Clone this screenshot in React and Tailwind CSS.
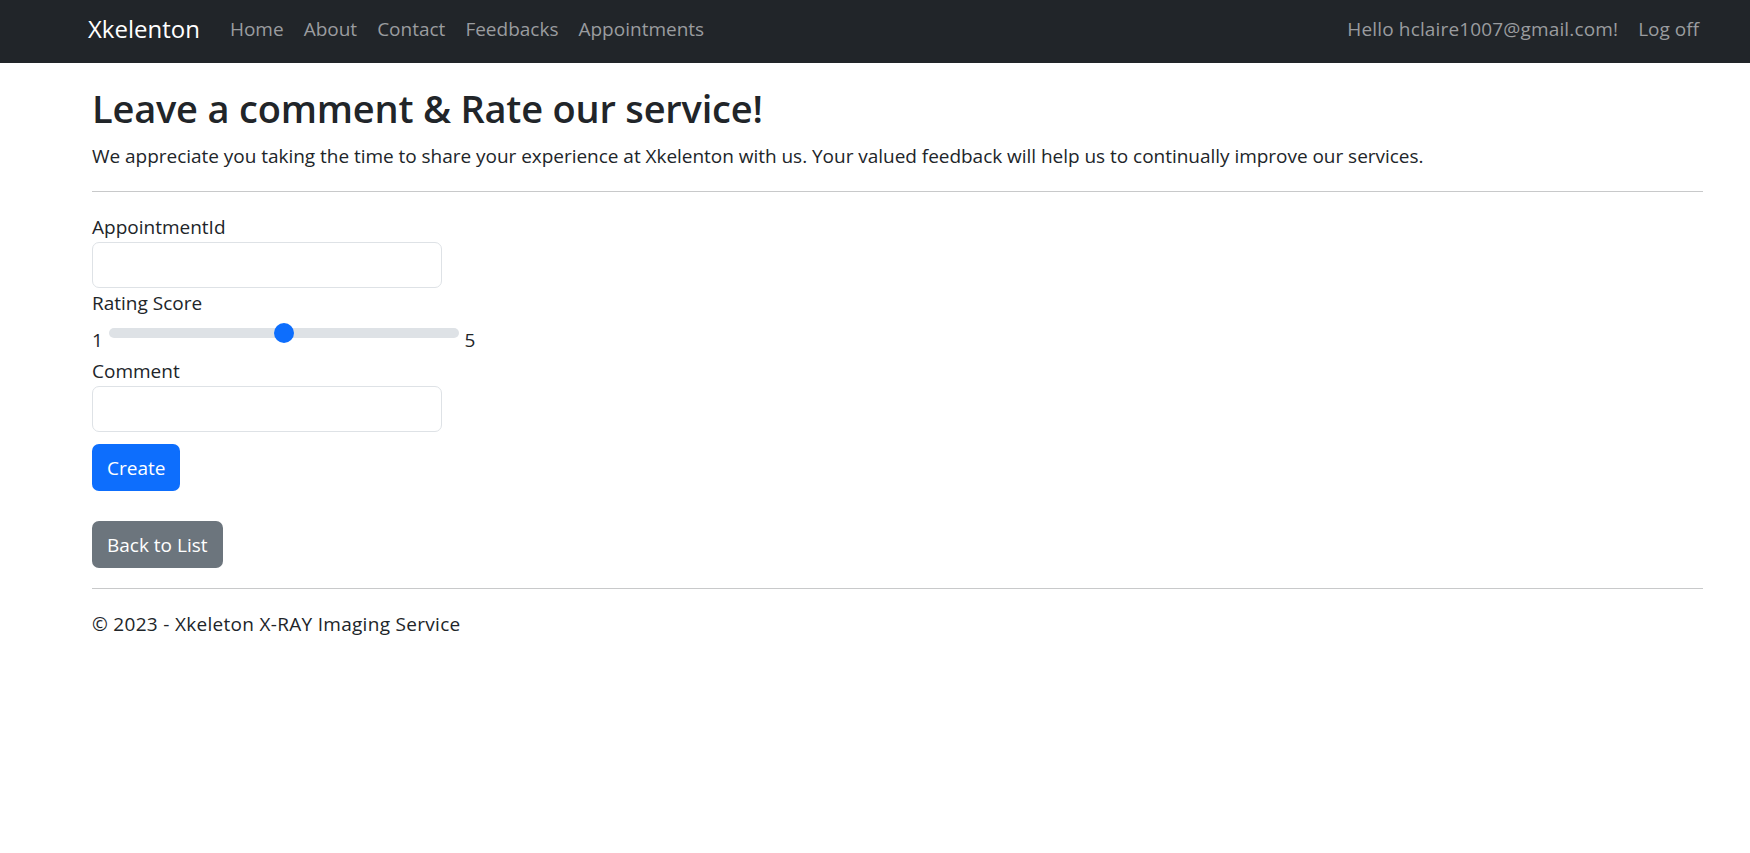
import React from "react";

function Field({ label }) {
  return (
    <div>
      <div className="h-[30px] leading-[30px]">{label}</div>
      <div className="w-[350px] h-[46px] rounded-[7px] border border-[#dee2e6] bg-white"></div>
    </div>
  );
}

export default function App() {
  return (
    <div className="min-h-screen bg-white text-[#212529] font-['Open_Sans','Noto_Sans',sans-serif] text-[19px]">
      <nav className="h-[63px] bg-[#212529] flex items-center justify-between pl-[88px] pr-[41px] pb-[5px]">
        <div className="flex items-center">
          <span className="text-white text-[24px] leading-[36px] mr-[20px]">Xkelenton</span>
          <ul className="flex items-center">
            {["Home", "About", "Contact", "Feedbacks", "Appointments"].map((t) => (
              <li key={t} className="px-[10px] leading-[30px] text-[#9a9c9f]">{t}</li>
            ))}
          </ul>
        </div>
        <ul className="flex items-center">
          <li className="px-[10px] leading-[30px] text-[#9a9c9f] tracking-[0.15px]">Hello hclaire1007@gmail.com!</li>
          <li className="px-[10px] leading-[30px] text-[#9a9c9f]">Log off</li>
        </ul>
      </nav>

      <main className="pl-[92px] pr-[47px] pt-[21px]">
        <h2 className="text-[38px] leading-[48px] font-semibold mb-[9px] tracking-[-0.2px]">
          Leave a comment &amp; Rate our service!
        </h2>
        <p className="leading-[30px] tracking-[-0.03px]">
          We appreciate you taking the time to share your experience at Xkelenton with us. Your valued feedback will help us to continually improve our services.
        </p>
        <div className="border-t border-[#c8c9ca] mt-[20px] mb-[20px]"></div>

        <Field label="AppointmentId" />
        <div className="h-[30px] leading-[30px]">Rating Score</div>
        <div className="flex items-start h-[38px]">
          <span className="leading-[30px] mt-[7px] w-[16.5px]">1</span>
          <div className="relative w-[350px] h-[30px] flex items-center">
            <div className="w-full h-[10px] rounded-full bg-[#dee2e6]"></div>
            <div className="absolute left-[165px] top-[5px] w-[20px] h-[20px] rounded-full bg-[#0d6efd]"></div>
          </div>
          <span className="leading-[30px] mt-[7px] ml-[6px]">5</span>
        </div>
        <Field label="Comment" />

        <div className="mt-[12px]">
          <button className="h-[47px] px-[15px] rounded-[7px] bg-[#0d6efd] text-white leading-[30px]">Create</button>
        </div>
        <div className="mt-[30px]">
          <button className="h-[47px] px-[15px] rounded-[7px] bg-[#6c757d] text-white leading-[30px]">Back to List</button>
        </div>
        <div className="border-t border-[#c8c9ca] mt-[20px]"></div>
        <footer className="mt-[20px] leading-[30px] tracking-[0.3px]">© 2023 - Xkeleton X-RAY Imaging Service</footer>
      </main>
    </div>
  );
}
